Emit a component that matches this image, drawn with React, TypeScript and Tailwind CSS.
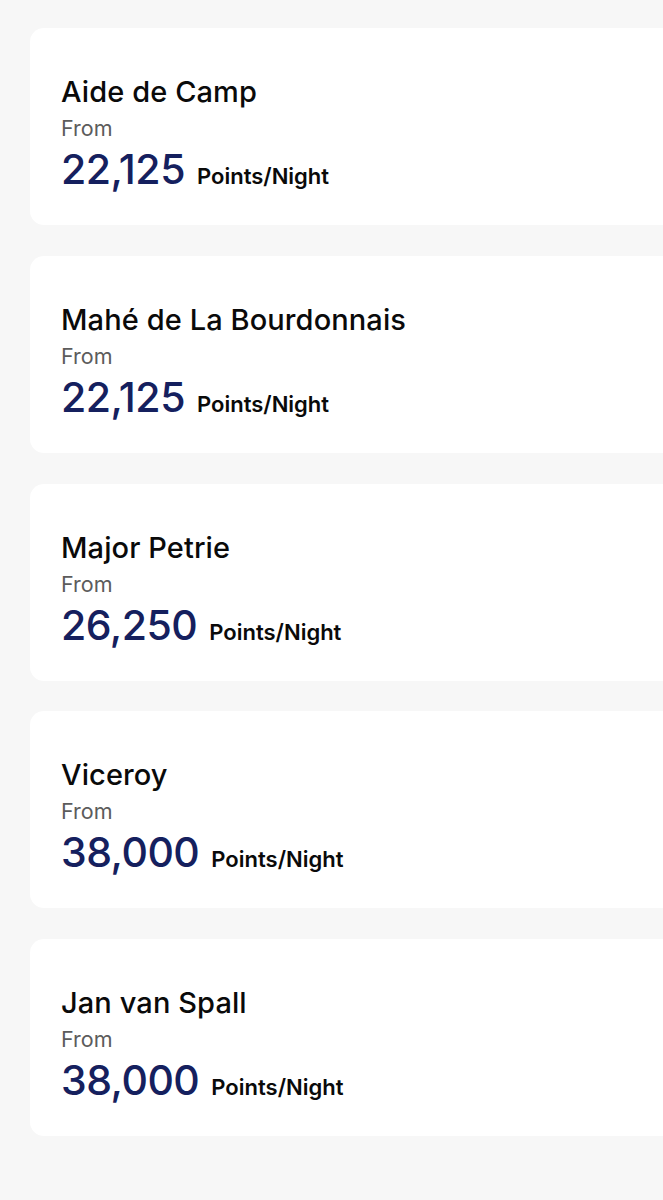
const rooms = [
  { name: 'Aide de Camp', points: '22,125' },
  { name: 'Mahé de La Bourdonnais', points: '22,125' },
  { name: 'Major Petrie', points: '26,250' },
  { name: 'Viceroy', points: '38,000' },
  { name: 'Jan van Spall', points: '38,000' },
]

function RoomCard({ name, points }: { name: string; points: string }) {
  return (
    <div className="h-[197px] bg-white rounded-l-[14px] pl-[31px] pt-[47px] flex flex-col">
      <h2 className="text-[29px] leading-[34px] font-medium text-[#0a0a0a] tracking-[0.1px]">{name}</h2>
      <div className="text-[21.5px] leading-[24px] text-[#5c5c5c] mt-[7px]">From</div>
      <div className="flex items-baseline gap-[12px] mt-[6px]">
        <span className="text-[41px] leading-[46px] font-medium text-[#15205e] tracking-[-0.5px]">{points}</span>
        <span className="text-[22px] leading-[24px] font-semibold text-[#0a0a0a]">Points/Night</span>
      </div>
    </div>
  )
}

export default function App() {
  return (
    <div
      className="min-h-[1200px] bg-[#f7f7f7] pl-[30px] pt-[28px] flex flex-col gap-[30.75px]"
      style={{ fontFamily: 'Inter, "Noto Sans", sans-serif' }}
    >
      {rooms.map((r) => (
        <RoomCard key={r.name} name={r.name} points={r.points} />
      ))}
    </div>
  )
}
